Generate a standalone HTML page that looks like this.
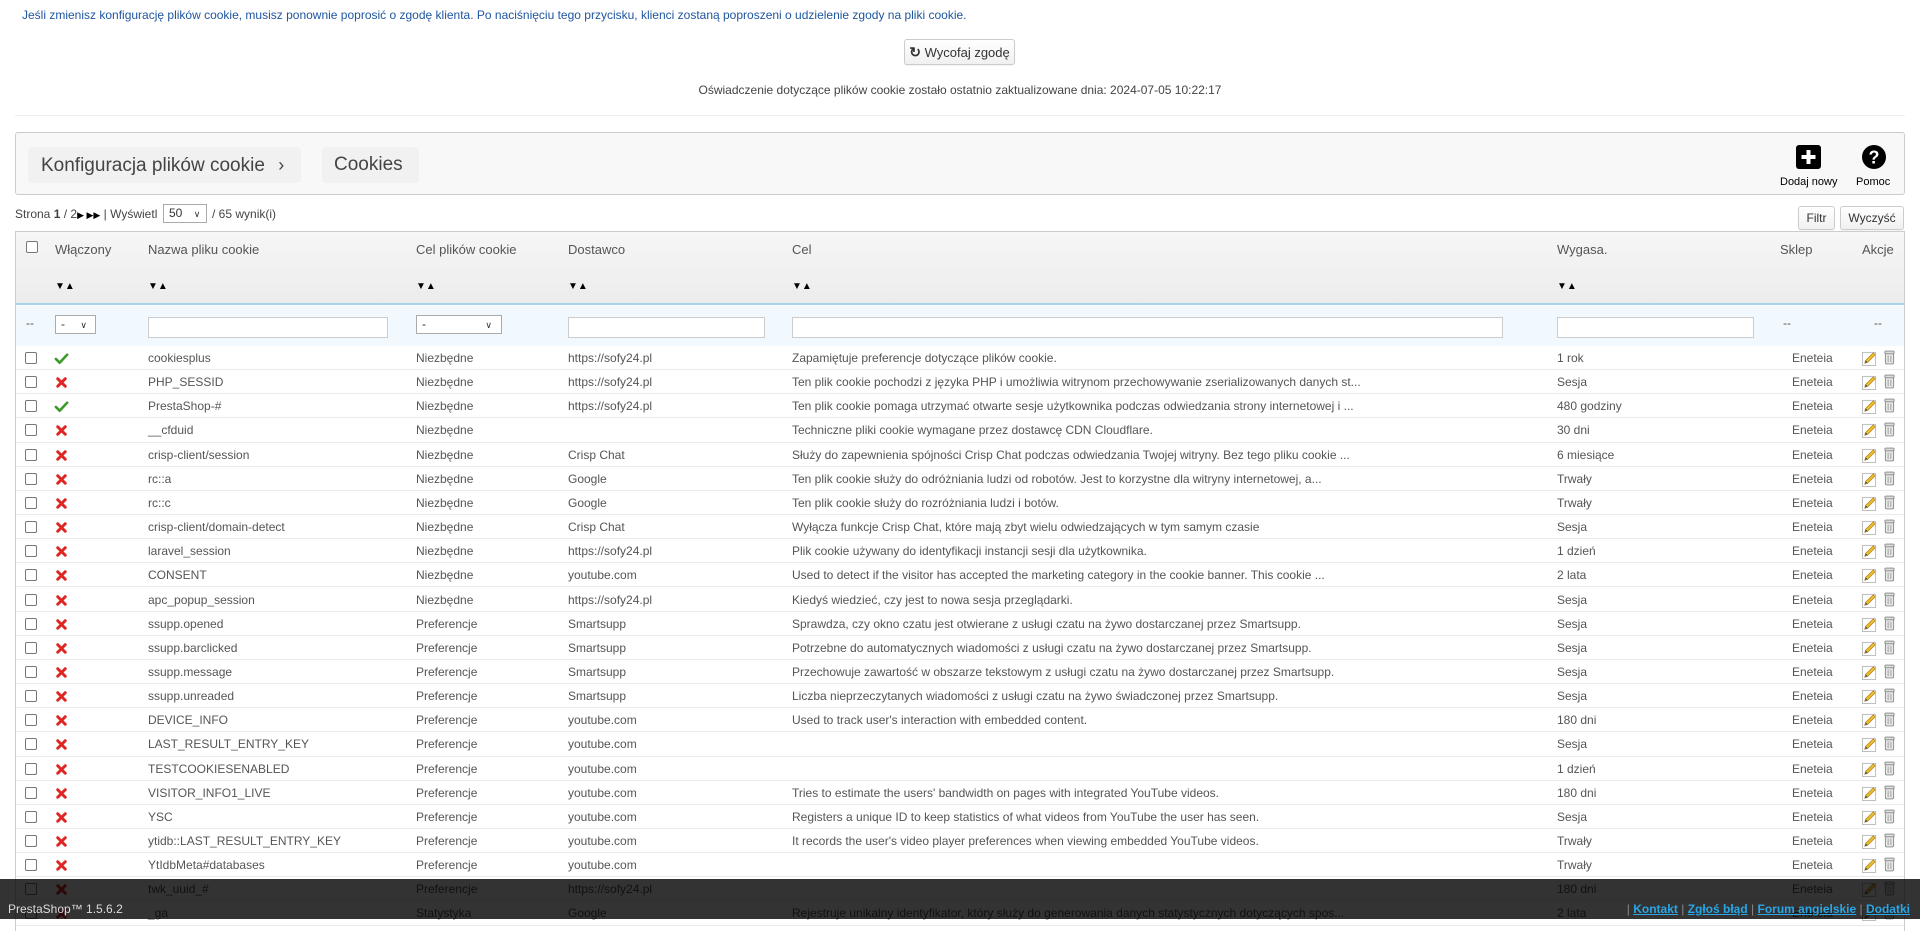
<!DOCTYPE html>
<html><head><meta charset="utf-8">
<style>
*{box-sizing:border-box;margin:0;padding:0}
body{width:1920px;height:919px;overflow:hidden;background:#fff;font-family:"Liberation Sans",Arial,sans-serif;font-size:12px;color:#555;position:relative}
.abs{position:absolute}
.top{left:22px;top:8px;font-size:12px;color:#1f56a0;white-space:nowrap}
.btn{position:absolute;border:1px solid #ccc;border-radius:3px;background:linear-gradient(#fff,#f0f0f0);color:#333;font-size:13px;text-align:center;box-shadow:0 1px 1px rgba(0,0,0,.05)}
.upd{left:0;width:1920px;top:83px;text-align:center;font-size:12px;color:#444}
.hr{left:15px;width:1890px;top:115px;height:1px;background:#eee}
.panel{left:15px;top:132px;width:1890px;height:63px;background:#f8f8f8;border:1px solid #ccc;border-radius:3px}
.bc{position:absolute;top:14px;height:36px;background:#f1f1f1;border-radius:4px;font-size:19px;color:#444;line-height:36px;white-space:nowrap}
.tbl{left:15px;top:231px;width:1890px;height:700px;border:1px solid #ccc;border-bottom:none}
.thead{position:absolute;left:0;top:0;width:100%;height:73px;background:linear-gradient(#f6f6f6,#ececec);border-bottom:2px solid #a6d2ee}
.frow{position:absolute;left:0;top:74px;width:100%;height:40px;background:#f1f8fe}
.h{position:absolute;top:10px;font-size:13px;color:#555;white-space:nowrap}
.ar{position:absolute;top:49px;font-size:10px;color:#000;letter-spacing:0}
.inp{position:absolute;top:11px;height:21px;border:1px solid #ccc;background:#fff}
.sel{position:absolute;top:8px;height:19px;border:1px solid #aaa;background:#fff;font-size:12px;padding-left:5px;line-height:17px;color:#333}
.r{position:absolute;left:0;width:100%;height:24.15px;border-bottom:1px solid #eaeaea;white-space:nowrap}
.r span{position:absolute;top:5px;color:#555;font-size:12px}
.r .cb{left:9px;top:6px;width:12px;height:12px;border:1px solid #777;border-radius:2px;background:#fff}
.r svg{position:absolute}
.n{left:132px}.p{left:400px}.d{left:552px}.c{left:776px}.w{left:1541px}.s{left:1776px}
.foot{left:0;top:879px;width:1920px;height:40px;background:rgba(0,0,0,.8)}
.foot a{color:#2aa6e6;font-weight:bold;text-decoration:underline}
</style></head><body>
<svg width="0" height="0" style="position:absolute">
<defs>
<symbol id="ok" viewBox="0 0 16 16"><path d="M2 8.5 L6 12.5 L14 4" fill="none" stroke="#3a9a2a" stroke-width="2.8" stroke-linecap="round" stroke-linejoin="round"/></symbol>
<symbol id="no" viewBox="0 0 16 16"><path d="M4 4 L12 12 M12 4 L4 12" stroke="#e02525" stroke-width="3.2" stroke-linecap="round"/></symbol>
<symbol id="ed" viewBox="0 0 16 16"><rect x="0.5" y="1.5" width="14" height="14" fill="#fff" stroke="#bbb"/><path d="M3 13 L4 10 L12 2 L14 4 L6 12 Z" fill="#f2c230" stroke="#b07d10" stroke-width=".8"/><path d="M3 13 L4 10 L6 12Z" fill="#555"/></symbol>
<symbol id="tr" viewBox="0 0 12 16"><rect x="1.5" y="3" width="9" height="12" rx="1.5" fill="#e8e8e8" stroke="#888"/><rect x="1" y="1" width="10" height="3" rx="1" fill="#ddd" stroke="#888"/><path d="M4.5 6v7M7.5 6v7" stroke="#999"/></symbol>
</defs></svg>

<div class="abs top">Jeśli zmienisz konfigurację plików cookie, musisz ponownie poprosić o zgodę klienta. Po naciśnięciu tego przycisku, klienci zostaną poproszeni o udzielenie zgody na pliki cookie.</div>
<div class="btn" style="left:904px;top:39px;width:111px;height:26px;line-height:24px"><span style="font-size:14px;font-weight:bold">&#x21BB;</span> Wycofaj zgodę</div>
<div class="abs upd">Oświadczenie dotyczące plików cookie zostało ostatnio zaktualizowane dnia: 2024-07-05 10:22:17</div>
<div class="abs hr"></div>

<div class="abs panel">
 <div class="bc" style="left:12px;width:273px;padding-left:13px">Konfiguracja plików cookie <span style="font-size:18px;margin-left:8px">&#x203A;</span></div>
 <div class="bc" style="left:306px;width:97px;padding-left:12px">Cookies</div>
 <svg class="abs" style="left:1780px;top:12px" width="25" height="24" viewBox="0 0 25 24"><rect x="0" y="0" width="25" height="24" rx="3" fill="#000"/><path d="M12.5 5v14M5.5 12h14" stroke="#fff" stroke-width="4"/></svg>
 <svg class="abs" style="left:1846px;top:12px" width="24" height="24" viewBox="0 0 24 24"><circle cx="12" cy="12" r="12" fill="#000"/><text x="12" y="18.5" text-anchor="middle" font-family="Liberation Sans" font-weight="bold" font-size="18" fill="#fff">?</text></svg>
 <div class="abs" style="left:1764px;top:43px;font-size:11px;color:#000">Dodaj nowy</div>
 <div class="abs" style="left:1840px;top:43px;font-size:11px;color:#000">Pomoc</div>
</div>

<div class="abs" style="left:15px;top:207px;font-size:12px;color:#444;white-space:nowrap">Strona <b>1</b> / 2<span style="font-size:9px;color:#000">&#x25B6; &#x25B6;&#x25B6;</span> | Wyświetl</div>
<div class="abs sel" style="left:163px;top:204px;width:44px;border-color:#aaa">50 <span style="font-size:9px;margin-left:8px">&#x2228;</span></div>
<div class="abs" style="left:212px;top:207px;font-size:12px;color:#444">/ 65 wynik(i)</div>
<div class="btn" style="left:1798px;top:206px;width:37px;height:24px;line-height:22px;font-size:12px">Filtr</div>
<div class="btn" style="left:1840px;top:206px;width:64px;height:24px;line-height:22px;font-size:12px">Wyczyść</div>

<div class="abs tbl">
 <div class="thead">
  <div class="abs" style="left:10px;top:9px;width:12px;height:12px;border:1px solid #777;border-radius:2px;background:#fff"></div>
  <div class="h" style="left:39px">Włączony</div><div class="ar" style="left:39px">&#x25BC;&#x25B2;</div>
  <div class="h" style="left:132px">Nazwa pliku cookie</div><div class="ar" style="left:132px">&#x25BC;&#x25B2;</div>
  <div class="h" style="left:400px">Cel plików cookie</div><div class="ar" style="left:400px">&#x25BC;&#x25B2;</div>
  <div class="h" style="left:552px">Dostawco</div><div class="ar" style="left:552px">&#x25BC;&#x25B2;</div>
  <div class="h" style="left:776px">Cel</div><div class="ar" style="left:776px">&#x25BC;&#x25B2;</div>
  <div class="h" style="left:1541px">Wygasa.</div><div class="ar" style="left:1541px">&#x25BC;&#x25B2;</div>
  <div class="h" style="left:1764px">Sklep</div>
  <div class="h" style="left:1846px">Akcje</div>
 </div>
 <div class="frow">
  <div class="abs" style="left:10px;top:10px">--</div>
  <div class="sel" style="left:39px;top:9px;width:41px">- <span style="font-size:9px;margin-left:12px">&#x2228;</span></div>
  <div class="inp" style="left:132px;width:240px"></div>
  <div class="sel" style="left:400px;top:9px;width:86px">- <span style="font-size:9px;margin-left:56px">&#x2228;</span></div>
  <div class="inp" style="left:552px;width:197px"></div>
  <div class="inp" style="left:776px;width:711px"></div>
  <div class="inp" style="left:1541px;width:197px"></div>
  <div class="abs" style="left:1767px;top:10px">--</div>
  <div class="abs" style="left:1858px;top:10px">--</div>
 </div>

<div class="r" style="top:114px"><i class="cb abs"></i><svg style="left:38px;top:5px" width="15" height="15"><use href="#ok"/></svg><span class="n">cookiesplus</span><span class="p">Niezbędne</span><span class="d">https://sofy24.pl</span><span class="c">Zapamiętuje preferencje dotyczące plików cookie.</span><span class="w">1 rok</span><span class="s">Eneteia</span><svg style="left:1846px;top:5px" width="15" height="15"><use href="#ed"/></svg><svg style="left:1868px;top:4px" width="11" height="15"><use href="#tr"/></svg></div>
<div class="r" style="top:138.15px"><i class="cb abs"></i><svg style="left:38px;top:5px" width="15" height="15"><use href="#no"/></svg><span class="n">PHP_SESSID</span><span class="p">Niezbędne</span><span class="d">https://sofy24.pl</span><span class="c">Ten plik cookie pochodzi z języka PHP i umożliwia witrynom przechowywanie zserializowanych danych st...</span><span class="w">Sesja</span><span class="s">Eneteia</span><svg style="left:1846px;top:5px" width="15" height="15"><use href="#ed"/></svg><svg style="left:1868px;top:4px" width="11" height="15"><use href="#tr"/></svg></div>
<div class="r" style="top:162.3px"><i class="cb abs"></i><svg style="left:38px;top:5px" width="15" height="15"><use href="#ok"/></svg><span class="n">PrestaShop-#</span><span class="p">Niezbędne</span><span class="d">https://sofy24.pl</span><span class="c">Ten plik cookie pomaga utrzymać otwarte sesje użytkownika podczas odwiedzania strony internetowej i ...</span><span class="w">480 godziny</span><span class="s">Eneteia</span><svg style="left:1846px;top:5px" width="15" height="15"><use href="#ed"/></svg><svg style="left:1868px;top:4px" width="11" height="15"><use href="#tr"/></svg></div>
<div class="r" style="top:186.45px"><i class="cb abs"></i><svg style="left:38px;top:5px" width="15" height="15"><use href="#no"/></svg><span class="n">__cfduid</span><span class="p">Niezbędne</span><span class="d"></span><span class="c">Techniczne pliki cookie wymagane przez dostawcę CDN Cloudflare.</span><span class="w">30 dni</span><span class="s">Eneteia</span><svg style="left:1846px;top:5px" width="15" height="15"><use href="#ed"/></svg><svg style="left:1868px;top:4px" width="11" height="15"><use href="#tr"/></svg></div>
<div class="r" style="top:210.6px"><i class="cb abs"></i><svg style="left:38px;top:5px" width="15" height="15"><use href="#no"/></svg><span class="n">crisp-client/session</span><span class="p">Niezbędne</span><span class="d">Crisp Chat</span><span class="c">Służy do zapewnienia spójności Crisp Chat podczas odwiedzania Twojej witryny. Bez tego pliku cookie ...</span><span class="w">6 miesiące</span><span class="s">Eneteia</span><svg style="left:1846px;top:5px" width="15" height="15"><use href="#ed"/></svg><svg style="left:1868px;top:4px" width="11" height="15"><use href="#tr"/></svg></div>
<div class="r" style="top:234.75px"><i class="cb abs"></i><svg style="left:38px;top:5px" width="15" height="15"><use href="#no"/></svg><span class="n">rc::a</span><span class="p">Niezbędne</span><span class="d">Google</span><span class="c">Ten plik cookie służy do odróżniania ludzi od robotów. Jest to korzystne dla witryny internetowej, a...</span><span class="w">Trwały</span><span class="s">Eneteia</span><svg style="left:1846px;top:5px" width="15" height="15"><use href="#ed"/></svg><svg style="left:1868px;top:4px" width="11" height="15"><use href="#tr"/></svg></div>
<div class="r" style="top:258.9px"><i class="cb abs"></i><svg style="left:38px;top:5px" width="15" height="15"><use href="#no"/></svg><span class="n">rc::c</span><span class="p">Niezbędne</span><span class="d">Google</span><span class="c">Ten plik cookie służy do rozróżniania ludzi i botów.</span><span class="w">Trwały</span><span class="s">Eneteia</span><svg style="left:1846px;top:5px" width="15" height="15"><use href="#ed"/></svg><svg style="left:1868px;top:4px" width="11" height="15"><use href="#tr"/></svg></div>
<div class="r" style="top:283.05px"><i class="cb abs"></i><svg style="left:38px;top:5px" width="15" height="15"><use href="#no"/></svg><span class="n">crisp-client/domain-detect</span><span class="p">Niezbędne</span><span class="d">Crisp Chat</span><span class="c">Wyłącza funkcje Crisp Chat, które mają zbyt wielu odwiedzających w tym samym czasie</span><span class="w">Sesja</span><span class="s">Eneteia</span><svg style="left:1846px;top:5px" width="15" height="15"><use href="#ed"/></svg><svg style="left:1868px;top:4px" width="11" height="15"><use href="#tr"/></svg></div>
<div class="r" style="top:307.2px"><i class="cb abs"></i><svg style="left:38px;top:5px" width="15" height="15"><use href="#no"/></svg><span class="n">laravel_session</span><span class="p">Niezbędne</span><span class="d">https://sofy24.pl</span><span class="c">Plik cookie używany do identyfikacji instancji sesji dla użytkownika.</span><span class="w">1 dzień</span><span class="s">Eneteia</span><svg style="left:1846px;top:5px" width="15" height="15"><use href="#ed"/></svg><svg style="left:1868px;top:4px" width="11" height="15"><use href="#tr"/></svg></div>
<div class="r" style="top:331.35px"><i class="cb abs"></i><svg style="left:38px;top:5px" width="15" height="15"><use href="#no"/></svg><span class="n">CONSENT</span><span class="p">Niezbędne</span><span class="d">youtube.com</span><span class="c">Used to detect if the visitor has accepted the marketing category in the cookie banner. This cookie ...</span><span class="w">2 lata</span><span class="s">Eneteia</span><svg style="left:1846px;top:5px" width="15" height="15"><use href="#ed"/></svg><svg style="left:1868px;top:4px" width="11" height="15"><use href="#tr"/></svg></div>
<div class="r" style="top:355.5px"><i class="cb abs"></i><svg style="left:38px;top:5px" width="15" height="15"><use href="#no"/></svg><span class="n">apc_popup_session</span><span class="p">Niezbędne</span><span class="d">https://sofy24.pl</span><span class="c">Kiedyś wiedzieć, czy jest to nowa sesja przeglądarki.</span><span class="w">Sesja</span><span class="s">Eneteia</span><svg style="left:1846px;top:5px" width="15" height="15"><use href="#ed"/></svg><svg style="left:1868px;top:4px" width="11" height="15"><use href="#tr"/></svg></div>
<div class="r" style="top:379.65px"><i class="cb abs"></i><svg style="left:38px;top:5px" width="15" height="15"><use href="#no"/></svg><span class="n">ssupp.opened</span><span class="p">Preferencje</span><span class="d">Smartsupp</span><span class="c">Sprawdza, czy okno czatu jest otwierane z usługi czatu na żywo dostarczanej przez Smartsupp.</span><span class="w">Sesja</span><span class="s">Eneteia</span><svg style="left:1846px;top:5px" width="15" height="15"><use href="#ed"/></svg><svg style="left:1868px;top:4px" width="11" height="15"><use href="#tr"/></svg></div>
<div class="r" style="top:403.8px"><i class="cb abs"></i><svg style="left:38px;top:5px" width="15" height="15"><use href="#no"/></svg><span class="n">ssupp.barclicked</span><span class="p">Preferencje</span><span class="d">Smartsupp</span><span class="c">Potrzebne do automatycznych wiadomości z usługi czatu na żywo dostarczanej przez Smartsupp.</span><span class="w">Sesja</span><span class="s">Eneteia</span><svg style="left:1846px;top:5px" width="15" height="15"><use href="#ed"/></svg><svg style="left:1868px;top:4px" width="11" height="15"><use href="#tr"/></svg></div>
<div class="r" style="top:427.95px"><i class="cb abs"></i><svg style="left:38px;top:5px" width="15" height="15"><use href="#no"/></svg><span class="n">ssupp.message</span><span class="p">Preferencje</span><span class="d">Smartsupp</span><span class="c">Przechowuje zawartość w obszarze tekstowym z usługi czatu na żywo dostarczanej przez Smartsupp.</span><span class="w">Sesja</span><span class="s">Eneteia</span><svg style="left:1846px;top:5px" width="15" height="15"><use href="#ed"/></svg><svg style="left:1868px;top:4px" width="11" height="15"><use href="#tr"/></svg></div>
<div class="r" style="top:452.1px"><i class="cb abs"></i><svg style="left:38px;top:5px" width="15" height="15"><use href="#no"/></svg><span class="n">ssupp.unreaded</span><span class="p">Preferencje</span><span class="d">Smartsupp</span><span class="c">Liczba nieprzeczytanych wiadomości z usługi czatu na żywo świadczonej przez Smartsupp.</span><span class="w">Sesja</span><span class="s">Eneteia</span><svg style="left:1846px;top:5px" width="15" height="15"><use href="#ed"/></svg><svg style="left:1868px;top:4px" width="11" height="15"><use href="#tr"/></svg></div>
<div class="r" style="top:476.25px"><i class="cb abs"></i><svg style="left:38px;top:5px" width="15" height="15"><use href="#no"/></svg><span class="n">DEVICE_INFO</span><span class="p">Preferencje</span><span class="d">youtube.com</span><span class="c">Used to track user's interaction with embedded content.</span><span class="w">180 dni</span><span class="s">Eneteia</span><svg style="left:1846px;top:5px" width="15" height="15"><use href="#ed"/></svg><svg style="left:1868px;top:4px" width="11" height="15"><use href="#tr"/></svg></div>
<div class="r" style="top:500.4px"><i class="cb abs"></i><svg style="left:38px;top:5px" width="15" height="15"><use href="#no"/></svg><span class="n">LAST_RESULT_ENTRY_KEY</span><span class="p">Preferencje</span><span class="d">youtube.com</span><span class="c"></span><span class="w">Sesja</span><span class="s">Eneteia</span><svg style="left:1846px;top:5px" width="15" height="15"><use href="#ed"/></svg><svg style="left:1868px;top:4px" width="11" height="15"><use href="#tr"/></svg></div>
<div class="r" style="top:524.55px"><i class="cb abs"></i><svg style="left:38px;top:5px" width="15" height="15"><use href="#no"/></svg><span class="n">TESTCOOKIESENABLED</span><span class="p">Preferencje</span><span class="d">youtube.com</span><span class="c"></span><span class="w">1 dzień</span><span class="s">Eneteia</span><svg style="left:1846px;top:5px" width="15" height="15"><use href="#ed"/></svg><svg style="left:1868px;top:4px" width="11" height="15"><use href="#tr"/></svg></div>
<div class="r" style="top:548.7px"><i class="cb abs"></i><svg style="left:38px;top:5px" width="15" height="15"><use href="#no"/></svg><span class="n">VISITOR_INFO1_LIVE</span><span class="p">Preferencje</span><span class="d">youtube.com</span><span class="c">Tries to estimate the users' bandwidth on pages with integrated YouTube videos.</span><span class="w">180 dni</span><span class="s">Eneteia</span><svg style="left:1846px;top:5px" width="15" height="15"><use href="#ed"/></svg><svg style="left:1868px;top:4px" width="11" height="15"><use href="#tr"/></svg></div>
<div class="r" style="top:572.85px"><i class="cb abs"></i><svg style="left:38px;top:5px" width="15" height="15"><use href="#no"/></svg><span class="n">YSC</span><span class="p">Preferencje</span><span class="d">youtube.com</span><span class="c">Registers a unique ID to keep statistics of what videos from YouTube the user has seen.</span><span class="w">Sesja</span><span class="s">Eneteia</span><svg style="left:1846px;top:5px" width="15" height="15"><use href="#ed"/></svg><svg style="left:1868px;top:4px" width="11" height="15"><use href="#tr"/></svg></div>
<div class="r" style="top:597px"><i class="cb abs"></i><svg style="left:38px;top:5px" width="15" height="15"><use href="#no"/></svg><span class="n">ytidb::LAST_RESULT_ENTRY_KEY</span><span class="p">Preferencje</span><span class="d">youtube.com</span><span class="c">It records the user's video player preferences when viewing embedded YouTube videos.</span><span class="w">Trwały</span><span class="s">Eneteia</span><svg style="left:1846px;top:5px" width="15" height="15"><use href="#ed"/></svg><svg style="left:1868px;top:4px" width="11" height="15"><use href="#tr"/></svg></div>
<div class="r" style="top:621.15px"><i class="cb abs"></i><svg style="left:38px;top:5px" width="15" height="15"><use href="#no"/></svg><span class="n">YtIdbMeta#databases</span><span class="p">Preferencje</span><span class="d">youtube.com</span><span class="c"></span><span class="w">Trwały</span><span class="s">Eneteia</span><svg style="left:1846px;top:5px" width="15" height="15"><use href="#ed"/></svg><svg style="left:1868px;top:4px" width="11" height="15"><use href="#tr"/></svg></div>
<div class="r" style="top:645.3px"><i class="cb abs"></i><svg style="left:38px;top:5px" width="15" height="15"><use href="#no"/></svg><span class="n">twk_uuid_#</span><span class="p">Preferencje</span><span class="d">https://sofy24.pl</span><span class="c"></span><span class="w">180 dni</span><span class="s">Eneteia</span><svg style="left:1846px;top:5px" width="15" height="15"><use href="#ed"/></svg><svg style="left:1868px;top:4px" width="11" height="15"><use href="#tr"/></svg></div>
<div class="r" style="top:669.45px"><i class="cb abs"></i><svg style="left:38px;top:5px" width="15" height="15"><use href="#no"/></svg><span class="n">_ga</span><span class="p">Statystyka</span><span class="d">Google</span><span class="c">Rejestruje unikalny identyfikator, który służy do generowania danych statystycznych dotyczących spos...</span><span class="w">2 lata</span><span class="s">Eneteia</span><svg style="left:1846px;top:5px" width="15" height="15"><use href="#ed"/></svg><svg style="left:1868px;top:4px" width="11" height="15"><use href="#tr"/></svg></div>
</div>

<div class="abs foot">
 <div class="abs" style="left:8px;top:23px;font-size:12px;color:#ddd">PrestaShop™ 1.5.6.2</div>
 <div class="abs" style="right:10px;top:23px;font-size:12px;color:#888;white-space:nowrap">| <a>Kontakt</a> | <a>Zgłoś błąd</a> | <a>Forum angielskie</a> | <a>Dodatki</a></div>
</div>
</body></html>
